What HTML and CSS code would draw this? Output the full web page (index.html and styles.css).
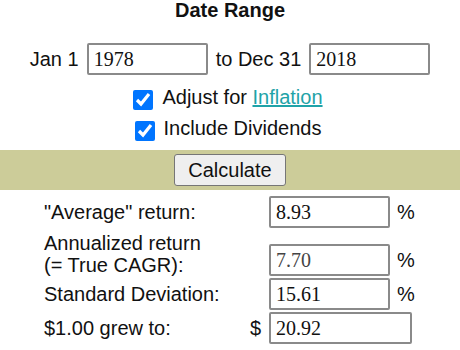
FILE: index.html
```html
<!DOCTYPE html>
<html lang="en">

<head>
    <meta charset="UTF-8">
    <meta name="viewport" content="width=device-width, initial-scale=1.0">
    <title>Date Range</title>
    <link rel="stylesheet" href="styles.css">
</head>

<body>
    <div class="range_wrap">
        <h3 class="range_title">Date Range</h3>

        <div class="date_row">
            <span>Jan 1</span>
            <input class="num_input" type="text" name="start_year" value="1978" />
            <span>to Dec 31</span>
            <input class="num_input" type="text" name="end_year" value="2018" />
        </div>

        <div class="chk_wrap">
            <label class="chk_row">
                <input type="checkbox" name="inflation" checked />
                <span>Adjust for <a href="#" class="link">Inflation</a></span>
            </label>
            <label class="chk_row">
                <input type="checkbox" name="dividends" checked />
                <span>Include Dividends</span>
            </label>
        </div>
    </div>

    <div class="calc_bar">
        <button type="button" class="calc_btn">Calculate</button>
    </div>

    <!-- 결과 -->
    <div class="result_wrap">
        <div class="result_row">
            <div class="result_label">"Average" return:</div>
            <div></div>
            <input class="num_input" type="text" value="8.93" readonly />
            <div class="unit">%</div>
        </div>
        <div class="result_row tall">
            <div class="result_label">Annualized return<br>(= True CAGR):</div>
            <div></div>
            <input class="num_input faded" type="text" value="7.70" readonly />
            <div class="unit">%</div>
        </div>
        <div class="result_row">
            <div class="result_label">Standard Deviation:</div>
            <div></div>
            <input class="num_input" type="text" value="15.61" readonly />
            <div class="unit">%</div>
        </div>
        <div class="result_row">
            <div class="result_label">$1.00 grew to:</div>
            <div class="unit">$</div>
            <input class="num_input wide" type="text" value="20.92" readonly />
        </div>
    </div>
</body>

</html>
```

FILE: styles.css
```css
body {
    margin: 0;
    font-family: "Liberation Sans", Arial, sans-serif;
    font-size: 20px;
    color: #111;
    background-color: #fff;
}

/* 날짜 범위 */
.range_wrap {
    text-align: center;
}

.range_title {
    margin: 0;
    font-size: 20px;
    line-height: 20px;
}

.date_row {
    display: flex;
    justify-content: center;
    align-items: center;
    gap: 8px;

    margin-top: 23px;
}

.num_input {
    width: 121px;
    height: 32px;

    box-sizing: border-box;
    border: 2px solid #8a8a8a;
    border-radius: 2px;
    padding: 0 5px;

    font-family: "Liberation Serif", "Times New Roman", serif;
    font-size: 20px;
    color: #111;
}

/* 체크박스 */
.chk_wrap {
    display: flex;
    flex-direction: column;
    align-items: center;

    margin-top: 7px;
}

.chk_row {
    display: flex;
    align-items: center;
    gap: 9px;

    height: 31px;
    padding-right: 4px;
}

.chk_row input {
    width: 20px;
    height: 20px;

    margin: 4px 0 0 0;
}

.link {
    color: #1fa3a8;
}

/* 계산 버튼 */
.calc_bar {
    display: flex;
    justify-content: center;
    align-items: center;

    height: 40px;
    margin-top: 6px;

    background-color: #cccc99;
}

.calc_btn {
    width: 112px;
    height: 32px;

    border: 1px solid #767676;
    border-radius: 3px;
    background-color: #efefef;

    font-family: "Liberation Sans", Arial, sans-serif;
    font-size: 20px;
    color: #111;
}

/* 결과 */
.result_wrap {
    display: flex;
    flex-direction: column;
    gap: 2px;

    padding-left: 44px;
    margin-top: 6px;
}

.result_row {
    display: grid;
    grid-template-columns: 206px 19px 128px auto;
    align-items: center;
}

.result_row:first-child {
    margin-bottom: 2px;
}

.result_row.tall {
    align-items: end;
}

.result_label {
    line-height: 22px;
}

.unit {
    line-height: 32px;
}

.faded {
    color: #444;
}

.wide {
    width: 143px;
}
```
